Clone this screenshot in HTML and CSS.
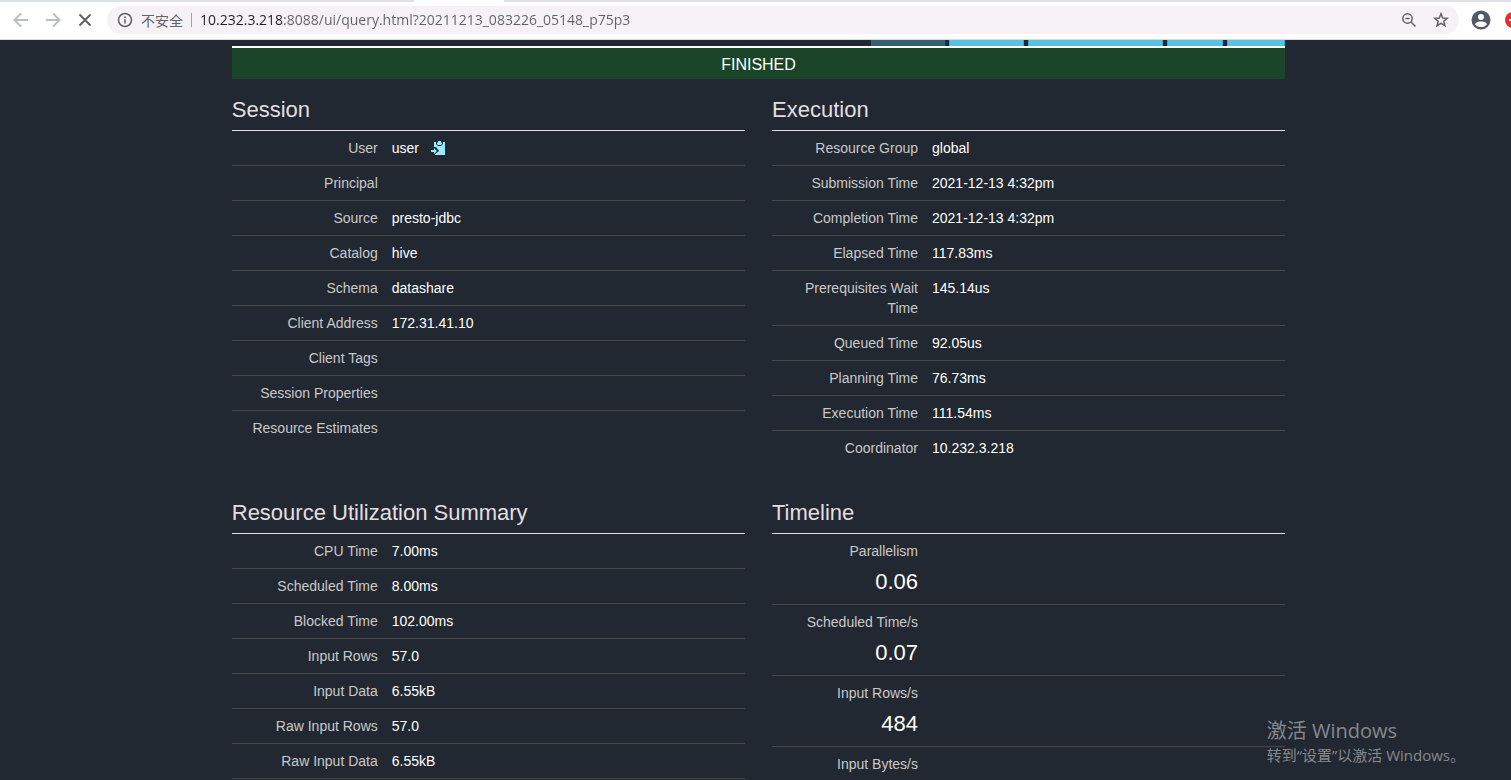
FILE: index.html
```html
<!DOCTYPE html>
<html lang="en">
<head>
<meta charset="utf-8">
<title>Query Details</title>
<link rel="stylesheet" href="styles.css">
</head>
<body>
<header class="browser">
  <div class="tab-strip"><span class="active-tab"></span></div>
  <div class="toolbar">
    <div class="nav-buttons">
      <button class="icon-button disabled" aria-label="Back"><svg width="20" height="20" viewBox="0 0 20 20"><path d="M17 10H4M10 3.5L3.5 10L10 16.500"/></svg></button>
      <button class="icon-button disabled" aria-label="Forward"><svg width="20" height="20" viewBox="0 0 20 20"><path d="M3 10H16M10 3.5L16.500 10L10 16.500"/></svg></button>
      <button class="icon-button" aria-label="Stop"><svg width="20" height="20" viewBox="0 0 20 20"><path d="M4.500 4.500L15.500 15.500M15.500 4.500L4.500 15.500"/></svg></button>
    </div>
    <div class="address-bar">
      <svg class="info" width="16" height="16" viewBox="0 0 16 16"><circle cx="8" cy="8" r="6.500"/><path d="M8 7.200V11.500M8 4.300V6"/></svg>
      <label class="security" for="url">不安全</label>
      <input id="url" class="url" type="text" value="10.232.3.218:8088/ui/query.html?20211213_083226_05148_p75p3">
      <button class="icon-button small" aria-label="Zoom"><svg width="16" height="16" viewBox="0 0 16 16"><circle cx="6.500" cy="6.500" r="4.700"/><path d="M4.300 6.500H8.700M10 10L14.500 14.500"/></svg></button>
      <button class="icon-button small" aria-label="Bookmark"><svg width="16" height="16" viewBox="0 0 16 16"><path d="M8 1.800L9.700 6L14.200 6.300L10.800 9.200L11.900 13.700L8 11.300L4.100 13.700L5.200 9.200L1.800 6.300L6.300 6Z"/></svg></button>
    </div>
    <button class="icon-button profile" aria-label="Profile"><svg width="20" height="20" viewBox="0 0 20 20"><circle class="solid" cx="10" cy="10" r="9.500"/><circle class="hole" cx="10" cy="7" r="3"/><path class="hole" d="M4 14.200C5 11.900 8 11.500 10 11.500S15 11.900 16 14.200C14.500 16.200 12.500 17 10 17S5.500 16.200 4 14.200Z"/></svg></button>
    <button class="icon-button update" aria-label="Update"><svg width="6" height="16" viewBox="0 0 6 16"><circle class="red" cx="8" cy="8" r="8"/><path class="bar" d="M4 8H6"/></svg></button>
  </div>
</header>

<main class="page">
  <div class="container">
    <nav class="view-tabs">
      <span class="view-tab current"></span>
      <span class="view-tab plan"></span>
      <span class="view-tab stage"></span>
      <span class="view-tab splits"></span>
      <span class="view-tab json"></span>
    </nav>
    <div class="status">FINISHED</div>
    <div class="sections">
      <section>
        <h3>Session</h3>
        <table>
          <tr><th scope="row">User</th><td>user <button class="copy" aria-label="Copy"><svg width="14" height="14" viewBox="0 0 14 14"><path d="M3 1H5V3L7 5H10L12 3V1H14V14H4V13L8 10L5 6H3Z"/><path d="M6 2L7 1V0H10V1L11 2V3L10 4H7L6 3Z"/><path d="M0 9H3V7L6 10L3 13V11H0Z"/></svg></button></td></tr>
          <tr><th scope="row">Principal</th><td></td></tr>
          <tr><th scope="row">Source</th><td>presto-jdbc</td></tr>
          <tr><th scope="row">Catalog</th><td>hive</td></tr>
          <tr><th scope="row">Schema</th><td>datashare</td></tr>
          <tr><th scope="row">Client Address</th><td>172.31.41.10</td></tr>
          <tr><th scope="row">Client Tags</th><td></td></tr>
          <tr><th scope="row">Session Properties</th><td></td></tr>
          <tr><th scope="row">Resource Estimates</th><td></td></tr>
        </table>
      </section>
      <section>
        <h3>Execution</h3>
        <table>
          <tr><th scope="row">Resource Group</th><td>global</td></tr>
          <tr><th scope="row">Submission Time</th><td>2021-12-13 4:32pm</td></tr>
          <tr><th scope="row">Completion Time</th><td>2021-12-13 4:32pm</td></tr>
          <tr><th scope="row">Elapsed Time</th><td>117.83ms</td></tr>
          <tr><th scope="row">Prerequisites Wait Time</th><td>145.14us</td></tr>
          <tr><th scope="row">Queued Time</th><td>92.05us</td></tr>
          <tr><th scope="row">Planning Time</th><td>76.73ms</td></tr>
          <tr><th scope="row">Execution Time</th><td>111.54ms</td></tr>
          <tr><th scope="row">Coordinator</th><td>10.232.3.218</td></tr>
        </table>
      </section>
      <section>
        <h3>Resource Utilization Summary</h3>
        <table class="continued">
          <tr><th scope="row">CPU Time</th><td>7.00ms</td></tr>
          <tr><th scope="row">Scheduled Time</th><td>8.00ms</td></tr>
          <tr><th scope="row">Blocked Time</th><td>102.00ms</td></tr>
          <tr><th scope="row">Input Rows</th><td>57.0</td></tr>
          <tr><th scope="row">Input Data</th><td>6.55kB</td></tr>
          <tr><th scope="row">Raw Input Rows</th><td>57.0</td></tr>
          <tr><th scope="row">Raw Input Data</th><td>6.55kB</td></tr>
        </table>
      </section>
      <section>
        <h3>Timeline</h3>
        <table>
          <tr><th scope="row">Parallelism<span class="figure">0.06</span></th><td></td></tr>
          <tr><th scope="row">Scheduled Time/s<span class="figure">0.07</span></th><td></td></tr>
          <tr><th scope="row">Input Rows/s<span class="figure">484</span></th><td></td></tr>
          <tr><th scope="row">Input Bytes/s</th><td></td></tr>
        </table>
      </section>
    </div>
  </div>
</main>

<aside class="watermark" lang="zh-CN">
  <p class="watermark-title">激活 Windows</p>
  <p class="watermark-text">转到“设置”以激活 Windows。</p>
</aside>
</body>
</html>
```
FILE: styles.css
```css
* { box-sizing: border-box; }

body {
  margin: 0;
  height: 100vh;
  overflow: hidden;
  display: flex;
  flex-direction: column;
  background: #222831;
  color: #fff;
  font: 14px/20px "Liberation Sans", Arial, sans-serif;
}

button {
  border: 0;
  padding: 0;
  background: none;
}

/* Browser chrome */
.browser {
  flex: none;
  background: #fff;
  border-bottom: 1px solid #dcdde2;
}

.tab-strip {
  height: 2px;
  padding-left: 414px;
  background: #dee1e6;
}

.active-tab {
  display: block;
  width: 90px;
  height: 2px;
  background: #fff;
}

.toolbar {
  height: 37px;
  display: flex;
  align-items: center;
  padding: 0 0 1px 11px;
}

.nav-buttons {
  display: flex;
  gap: 12px;
  margin-right: 12px;
}

.icon-button { display: block; flex: none; }
.icon-button svg, .info { display: block; }

.icon-button path,
.icon-button circle,
.info path,
.info circle {
  fill: none;
  stroke: #5f6368;
  stroke-width: 2;
}

.icon-button.disabled path { stroke: #bcbec1; }
.small circle, .small path, .info circle, .info path { stroke-width: 1.5; }

.address-bar {
  flex: 1;
  height: 28px;
  display: flex;
  align-items: center;
  gap: 16px;
  padding: 0 10px;
  border-radius: 14px;
  background: #f6f1f5;
}

.info { flex: none; margin-right: -8px; }

.security {
  flex: none;
  padding-right: 8px;
  border-right: 1px solid #a5a4a8;
  margin-right: -8px;
  color: #5f6368;
  font: 14px/14px "Noto Sans CJK SC", sans-serif;
}

.url {
  flex: 1;
  min-width: 0;
  height: 20px;
  border: 0;
  padding: 0;
  font: 14px/20px "Open Sans", sans-serif;
  color: transparent;
  background: linear-gradient(to right, #202124 83px, #5f6368 83px);
  -webkit-background-clip: text;
  background-clip: text;
}

.profile { margin-left: 12px; }
.update { margin-left: 14px; }
.profile .solid { fill: #515966; stroke: none; }
.profile .hole { fill: #fff; stroke: none; }
.update .red { fill: #dd3426; stroke: none; }
.update .bar { stroke: #fff; }

/* Query page */
.page {
  flex: 1;
  min-height: 0;
  padding-left: 6px;
  overflow: hidden;
}

.container {
  width: 70%;
  min-width: 720px;
  margin: 0 auto;
}

.view-tabs {
  display: flex;
  justify-content: flex-end;
  gap: 4px;
}

.view-tab {
  height: 6px;
  background: #58c2e0;
  border: solid #30afd9;
  border-width: 0 1px;
}

.view-tab.current { width: 74px; background: #316274; border-color: #14709a; }
.view-tab.plan { width: 75px; }
.view-tab.stage { width: 135px; }
.view-tab.splits { width: 56px; }
.view-tab.json { width: 58px; }

.status {
  padding: 7px 0 4px;
  border-top: 2px solid #fff;
  background: #1a4529;
  text-align: center;
  font-size: 16px;
}

.sections {
  display: grid;
  grid-template-columns: 1fr 1fr;
  column-gap: 27px;
  row-gap: 33px;
  padding-top: 17px;
}

h3 {
  margin: 0;
  padding-bottom: 6px;
  border-bottom: 1px solid #e1dfe1;
  color: #e1dfe1;
  font-size: 22px;
  line-height: 28px;
  font-weight: 400;
}

table {
  width: 100%;
  table-layout: fixed;
  border-collapse: separate;
  border-spacing: 0;
}

th, td {
  padding: 7px;
  border-bottom: 1px solid #484848;
  text-align: left;
  vertical-align: top;
  font-weight: 400;
}

th {
  width: 153px;
  color: #c9c9c9;
  text-align: right;
}

tr:last-child > * { border-bottom-color: transparent; }
.continued tr:last-child > * { border-bottom-color: #484848; }

.figure {
  display: block;
  padding: 7px 0 1px;
  color: #fff;
  font-size: 22px;
  line-height: 28px;
}

.copy { margin-left: 8px; vertical-align: -2px; }
.copy svg { display: block; fill: #97eaff; }

/* Desktop overlay */
.watermark {
  position: absolute;
  right: 46px;
  bottom: 15px;
  color: #85898e;
  font-family: "Open Sans", "Noto Sans CJK SC", sans-serif;
}

.watermark p { margin: 0; }
.watermark-title { font-size: 20px; line-height: 28px; }
.watermark-text { font-size: 15px; line-height: 20px; }
```
